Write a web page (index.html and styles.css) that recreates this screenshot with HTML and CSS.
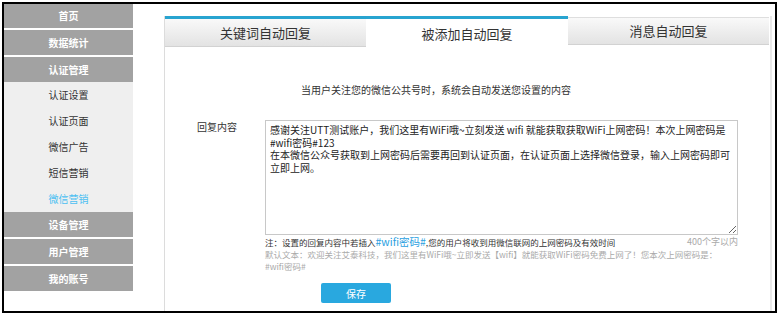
FILE: index.html
```html
<!DOCTYPE html>
<html lang="zh-CN">
<head>
  <meta charset="UTF-8" />
  <meta name="viewport" content="width=device-width, initial-scale=1.0"/>
  <title>微信营销</title>
  <link rel="stylesheet" href="styles.css">
</head>
<body>
  <div class="frame">
    <ul class="sidebar">
      <li class="menu first">首页</li>
      <li class="menu">数据统计</li>
      <li class="menu open">认证管理</li>
      <li class="sub">
        <span>认证设置</span>
        <span>认证页面</span>
        <span>微信广告</span>
        <span>短信营销</span>
        <span class="active">微信营销</span>
      </li>
      <li class="menu">设备管理</li>
      <li class="menu">用户管理</li>
      <li class="menu">我的账号</li>
    </ul>

    <div class="panel">
      <div class="tabs">
        <div class="tab tab-left">关键词自动回复</div>
        <div class="tab tab-active">被添加自动回复</div>
        <div class="tab tab-right">消息自动回复</div>
      </div>

      <p class="desc">当用户关注您的微信公共号时，系统会自动发送您设置的内容</p>

      <div class="form-row">
        <label for="reply">回复内容</label>
        <textarea id="reply" name="reply">感谢关注UTT测试账户，我们这里有WiFi哦~立刻发送 wifi 就能获取获取WiFi上网密码！本次上网密码是
#wifi密码#123
在本微信公众号获取到上网密码后需要再回到认证页面，在认证页面上选择微信登录，输入上网密码即可立即上网。</textarea>
      </div>

      <div class="notes">
        <div class="note-row">
          <span>注：设置的回复内容中若插入<em>#wifi密码#</em>,您的用户将收到用微信联网的上网密码及有效时间</span>
          <span class="limit">400个字以内</span>
        </div>
        <p class="default-text">默认文本：欢迎关注艾泰科技，我们这里有WiFi哦~立即发送【wifi】就能获取WiFi密码免费上网了！您本次上网密码是：<br>#wifi密码#</p>
        <button type="button" class="save-btn">保存</button>
      </div>
    </div>
  </div>
</body>
</html>
```

FILE: styles.css
```css
body {
  margin: 0;
  font-family: "Noto Sans CJK SC", "Noto Sans", sans-serif;
  background-color: #fff;
  color: #333;
}

.frame {
  margin: 2px 0 0 2px;
  width: 775px;
  height: 311px;
  border: 2px solid #000;
  box-sizing: border-box;
  display: flex;
  align-items: flex-start;
  overflow: hidden;
}

.sidebar {
  list-style: none;
  margin: 0;
  padding: 0;
  width: 129px;
  flex-shrink: 0;
}

.menu {
  height: 25px;
  line-height: 25px;
  margin-bottom: 2px;
  background-color: #a2a2a2;
  color: #fff;
  font-size: 10px;
  font-weight: bold;
  text-align: center;
}

.menu.first {
  height: 24px;
  line-height: 24px;
}

.menu.open {
  margin-bottom: 0;
}

.sub {
  background-color: #efefef;
  display: flex;
  flex-direction: column;
}

.sub span {
  height: 26px;
  line-height: 26px;
  font-size: 10px;
  text-align: center;
  color: #333;
}

.sub span.active {
  color: #4cbff2;
}

.panel {
  margin: 12px 0 0 31px;
  width: 608px;
  height: 320px;
  flex-shrink: 0;
  box-sizing: border-box;
  border-left: 1px solid #dcdcdc;
  border-right: 2px solid #e9e9e9;
  padding-right: 1px;
}

.tabs {
  display: flex;
  align-items: flex-start;
}

.tab {
  box-sizing: border-box;
  flex-shrink: 0;
  font-size: 13px;
  text-align: center;
  color: #333;
}

.tab-left {
  width: 201px;
  height: 31px;
  line-height: 27px;
  border-top: 3px solid #28a4d0;
  border-bottom: 1px solid #d2d2d2;
  background: linear-gradient(#f9f9f9, #e3e3e3);
}

.tab-active {
  width: 202px;
  height: 31px;
  line-height: 29px;
  border-top: 3px solid #28a4d0;
  background-color: #fff;
}

.tab-right {
  width: 201px;
  height: 28px;
  margin-top: 1px;
  line-height: 26px;
  border-top: 1px solid #dedede;
  border-bottom: 1px solid #d2d2d2;
  background: linear-gradient(#f9f9f9, #e3e3e3);
}

.desc {
  margin: 37px 0 0;
  padding-left: 136px;
  font-size: 10px;
  line-height: 12px;
}

.form-row {
  display: flex;
  margin-top: 24px;
}

.form-row label {
  width: 100px;
  flex-shrink: 0;
  padding: 1px 0 0 32px;
  box-sizing: border-box;
  font-size: 10px;
  line-height: 12px;
}

.form-row textarea {
  display: block;
  flex-shrink: 0;
  width: 473px;
  height: 115px;
  box-sizing: border-box;
  margin: 0;
  padding: 3px 1px 3px 4px;
  border: 1px solid #c8c8c8;
  font-family: "Noto Sans CJK SC", "Noto Sans", sans-serif;
  font-size: 10px;
  line-height: 12.5px;
  color: #222;
  overflow: hidden;
}

.notes {
  margin-left: 100px;
  width: 473px;
}

.note-row {
  display: flex;
  justify-content: space-between;
  margin-top: 1px;
  font-size: 8.5px;
  line-height: 12px;
  color: #333;
}

.note-row em {
  font-style: normal;
  font-size: 10.5px;
  color: #2aa0df;
}

.limit {
  color: #aaa;
  font-size: 9px;
}

.default-text {
  margin: 0;
  font-size: 8.5px;
  line-height: 12px;
  color: #aaa;
}

.save-btn {
  display: block;
  margin: 11px 0 0 56px;
  width: 70px;
  height: 20px;
  padding: 0;
  border: none;
  border-radius: 2px;
  background-color: #29a8df;
  color: #fff;
  font-family: "Noto Sans CJK SC", sans-serif;
  font-size: 10px;
  cursor: pointer;
}
```
